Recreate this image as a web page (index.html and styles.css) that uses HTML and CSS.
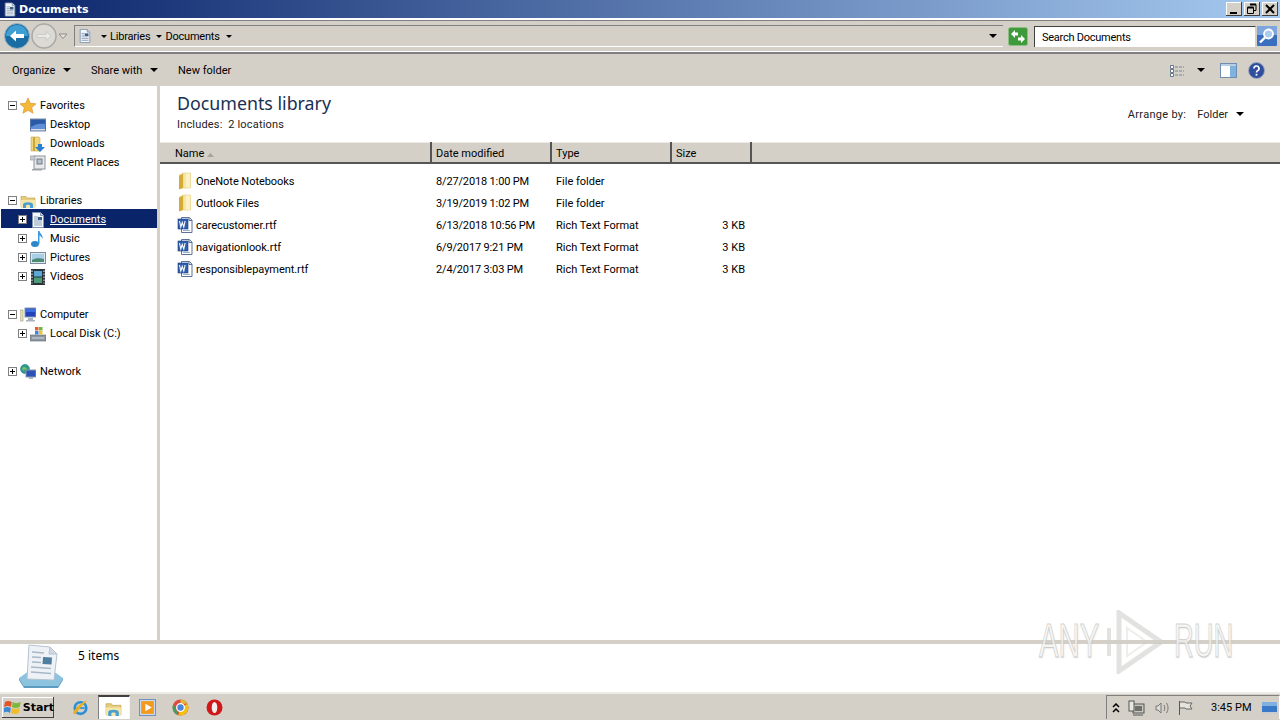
FILE: index.html
```html
<!DOCTYPE html>
<html>
<head>
<title>Documents</title>
<link rel="stylesheet" href="styles.css">
</head>
<body>
<svg class="defs" width="0" height="0">
	<defs>
		<symbol id="doc" viewBox="0 0 16 16">
			<path d="M2.500 .5h8l3 3v12h-11z" fill="#f4f7fb" stroke="#7f93ad"/>
			<path d="M10.500 .5v3h3" fill="#cfdcec" stroke="#7f93ad"/>
			<path d="M4 5h4M4 7h4M4 9h8M4 11h8M4 13h8" stroke="#8da0b8"/>
			<rect x="8" y="5" width="4" height="3" fill="#3b5f8a"/>
		</symbol>
		<symbol id="folder" viewBox="0 0 16 18">
			<path d="M2 3l4-2h7v15H6l-4 1z" fill="#e3c765"/>
			<path d="M6 1h7.500v15H6z" fill="#f6e7a4" stroke="#e2cd7c" stroke-width=".6"/>
			<path d="M2 4l4-2v14l-4 1.500z" fill="#d4ab35"/>
			<path d="M9 1.500h4v14H9z" fill="#fbf2c8"/>
		</symbol>
		<symbol id="rtf" viewBox="0 0 16 16">
			<path d="M4.500 .5h8l2.500 2.500v12.500H4.500z" fill="#fff" stroke="#5b7396"/>
			<path d="M12 .5v3h3" fill="#d5dfec" stroke="#5b7396"/>
			<rect x="1" y="2" width="10" height="10" fill="#2f5fae" stroke="#1c3f80" stroke-width=".6"/>
			<path d="M2.500 4l1.300 6 1.500-4.500L6.800 10l1.300-6" fill="none" stroke="#fff" stroke-width="1.100"/>
			<path d="M6 13.500h7" stroke="#9db1ca"/>
		</symbol>
		<symbol id="libfolder" viewBox="0 0 16 16">
			<path d="M1 3.500h5l1 1.500h8v9H1z" fill="#e6cd7c" stroke="#b89b48" stroke-width=".6"/>
			<path d="M1 7h14v7.500H1z" fill="#f3e6a8"/>
			<path d="M3 15v-3.500c0-3 10-3 10 0V15h-3v-2.500c0-1-4-1-4 0V15z" fill="#4a9fd0"/>
		</symbol>
		<symbol id="ie" viewBox="0 0 16 16">
			<ellipse cx="8" cy="8.500" rx="5.500" ry="5.500" fill="none" stroke="#2a8fd6" stroke-width="2.400"/>
			<path d="M4 8.500h8" stroke="#2a8fd6" stroke-width="1.600"/>
			<path d="M1 13.500C3 8 9 3 14.500 1.500 11 5 6 10 3 14.500z" fill="#e8b020"/>
		</symbol>
		<symbol id="plus" viewBox="0 0 9 9">
			<rect x=".5" y=".5" width="8" height="8" fill="#fff" stroke="#808080"/>
			<path d="M2 4.500h5M4.500 2v5" stroke="#000"/>
		</symbol>
		<symbol id="minus" viewBox="0 0 9 9">
			<rect x=".5" y=".5" width="8" height="8" fill="#fff" stroke="#808080"/>
			<path d="M2 4.500h5" stroke="#000"/>
		</symbol>
	</defs>
</svg>

<div class="titlebar">
	<svg class="title-icon"><use href="#doc"/></svg>
	<span class="title-text">Documents</span>
	<div class="win-buttons">
		<div class="win-btn"><svg width="16" height="14"><path d="M4 10h7v2H4z" fill="#000"/></svg></div>
		<div class="win-btn"><svg width="16" height="14"><path d="M6 2.500h6v6h-2M3.500 5.500h6v6h-6z" fill="none" stroke="#000"/><path d="M6 2.500h6M3.500 5.500h6" stroke="#000" stroke-width="2"/></svg></div>
		<div class="win-btn"><svg width="16" height="14"><path d="M4 3l8 8M12 3l-8 8" stroke="#000" stroke-width="2"/></svg></div>
	</div>
</div>

<div class="addressbar">
	<div class="nav-buttons">
		<svg class="nav-back" width="26" height="26" viewBox="0 0 26 26">
			<circle cx="13" cy="13" r="12.500" fill="#1a6da3" stroke="#9db5c4"/>
			<path d="M2 13a11 11 0 0 1 22 0z" fill="#3f9fd2"/>
			<path d="M6 13l6-5.500v3.500h8v4h-8v3.500z" fill="#fff"/>
		</svg>
		<svg class="nav-fwd" width="26" height="26" viewBox="0 0 26 26">
			<circle cx="13" cy="13" r="12" fill="#dcdad4" stroke="#a8a8a4" stroke-width="1.500"/>
			<path d="M20 13l-5-4.500v3H6v3h9v3z" fill="#eceae6" stroke="#bbb" stroke-width=".6"/>
		</svg>
		<svg class="nav-drop" width="10" height="7"><path d="M1 1l4 4.500L9 1z" fill="#e6e4de" stroke="#8c8c8c"/></svg>
	</div>
	<div class="address-box">
		<svg class="address-icon"><use href="#doc"/></svg>
		<span class="crumb-arrow"></span>
		<span class="crumb">Libraries</span>
		<span class="crumb-arrow"></span>
		<span class="crumb">Documents</span>
		<span class="crumb-arrow"></span>
		<span class="address-space"></span>
		<span class="crumb-arrow"></span>
	</div>
	<svg class="refresh" width="20" height="19" viewBox="0 0 20 19">
		<rect x=".5" y=".5" width="19" height="18" rx="2" fill="#3e9a3a" stroke="#8bbf86"/>
		<path d="M3 7l4-4v2.500h3v3H7V11zM17 12l-4 4v-2.500h-3v-3h3V8z" fill="#fff"/>
	</svg>
	<div class="search-box">Search Documents</div>
	<svg class="search-btn" width="20" height="20" viewBox="0 0 20 20">
		<rect width="20" height="20" rx="1" fill="#3a6fc0"/>
		<rect width="20" height="9" fill="#7fa6dc"/>
		<circle cx="11.500" cy="8" r="4.500" fill="#a9cdf0" stroke="#fff" stroke-width="1.800"/>
		<path d="M8 11.500l-5 5" stroke="#fff" stroke-width="2.400"/>
	</svg>
</div>

<div class="toolbar">
	<div class="tool tool-organize">Organize<span class="caret"></span></div>
	<div class="tool tool-share">Share with<span class="caret"></span></div>
	<div class="tool">New folder</div>
	<div class="tool-right">
		<svg width="16" height="13" viewBox="0 0 16 13">
			<path d="M1.500 1.500h3v3h-3zM1.500 5.500h3v3h-3zM1.500 9.500h3v3h-3z" fill="#fff" stroke="#66788f"/>
			<path d="M6 3h9M6 7h9M6 11h9" stroke="#74869c" stroke-dasharray="3 1"/>
		</svg>
		<span class="caret view-caret"></span>
		<svg class="pane-icon" width="17" height="15" viewBox="0 0 17 15">
			<rect x=".5" y=".5" width="16" height="14" fill="#fff" stroke="#6f8db0"/>
			<rect x="10" y="1" width="6" height="13" fill="#7fb2dc"/>
			<path d="M1 1h15v2H1z" fill="#b9cfe6"/>
		</svg>
		<svg class="help-icon" width="17" height="17" viewBox="0 0 17 17">
			<circle cx="8.500" cy="8.500" r="8" fill="#2f4f9e" stroke="#a0a8bc"/>
			<path d="M6 6.500a2.500 2.500 0 1 1 3.500 2.300c-.7.300-1 .7-1 1.700" fill="none" stroke="#fff" stroke-width="1.700"/>
			<rect x="7.600" y="11.800" width="1.800" height="1.800" fill="#fff"/>
		</svg>
	</div>
</div>

<div class="main">
	<div class="sidebar">
		<div class="tree-row"><svg class="exp"><use href="#minus"/></svg>
			<svg class="ico" viewBox="0 0 16 16"><path d="M8 0l2.300 5.300 5.700.5-4.300 3.800 1.300 5.600L8 12.300 3 15.200l1.300-5.600L0 5.800l5.700-.5z" fill="#f5b93a" stroke="#d98a20" stroke-width=".6"/></svg>Favorites</div>
		<div class="tree-row child"><span class="exp-gap"></span>
			<svg class="ico" viewBox="0 0 16 16"><rect y="2" width="16" height="12" fill="#2a5aa8" stroke="#7b8da8"/><path d="M1 10c4-3 9-4 14-3v6H1z" fill="#5f8fd6"/><path d="M1 12h14v1.500H1z" fill="#d8dde6"/></svg>Desktop</div>
		<div class="tree-row child"><span class="exp-gap"></span>
			<svg class="ico" viewBox="0 0 16 16"><path d="M1 1h8l1 1v13H1z" fill="#efd67c" stroke="#c2a650" stroke-width=".6"/><path d="M3 1h2v14H3z" fill="#c9a83e"/><path d="M8 8h4v3h3l-5 5-5-5h3z" fill="#2a7fd0"/></svg>Downloads</div>
		<div class="tree-row child"><span class="exp-gap"></span>
			<svg class="ico" viewBox="0 0 16 16"><rect x="4" y="1" width="11" height="13" fill="#e8ebee" stroke="#8d9499"/><rect x="7" y="4" width="5" height="5" fill="#b6c2cc" stroke="#6f7a82"/><path d="M0 1h5v4H0z" fill="#c5cbd0" stroke="#8d9499" stroke-width=".6"/><path d="M2 14h10v1.500H2z" fill="#9aa4ac"/></svg>Recent Places</div>
		<div class="tree-gap"></div>

		<div class="tree-row"><svg class="exp"><use href="#minus"/></svg>
			<svg class="ico"><use href="#libfolder"/></svg>Libraries</div>
		<div class="tree-row child selected"><svg class="exp"><use href="#plus"/></svg>
			<svg class="ico"><use href="#doc"/></svg><span class="sel-label">Documents</span></div>
		<div class="tree-row child"><svg class="exp"><use href="#plus"/></svg>
			<svg class="ico" viewBox="0 0 16 16"><ellipse cx="5" cy="13" rx="4" ry="3" fill="#2c86c9"/><path d="M8 13V0h1.500c.500 3 4 4 3 8-.5-2-2-3-3-3.500V13z" fill="#3d9ae0"/></svg>Music</div>
		<div class="tree-row child"><svg class="exp"><use href="#plus"/></svg>
			<svg class="ico" viewBox="0 0 16 16"><rect x=".5" y="2.500" width="15" height="11" fill="#dfe8ee" stroke="#7d8d9c"/><rect x="2" y="4" width="12" height="8" fill="#a9cfe6"/><path d="M2 10c3-2 8-2 12-1v3H2z" fill="#4c8a74"/></svg>Pictures</div>
		<div class="tree-row child"><svg class="exp"><use href="#plus"/></svg>
			<svg class="ico" viewBox="0 0 16 16"><rect x="1" y="0" width="14" height="16" fill="#2b3238"/><rect x="4" y="2" width="8" height="5.500" fill="#5aa8d8"/><rect x="4" y="8.500" width="8" height="5.500" fill="#4d9a78"/><path d="M2 1.500v13M14 1.500v13" stroke="#cfd6da" stroke-width="1.200" stroke-dasharray="1.500 1.500"/></svg>Videos</div>
		<div class="tree-gap"></div>

		<div class="tree-row"><svg class="exp"><use href="#minus"/></svg>
			<svg class="ico" viewBox="0 0 16 16"><rect x="0" y="3" width="3" height="11" fill="#e4e0b8" stroke="#9a9a80" stroke-width=".6"/><rect x="5" y="1" width="11" height="9" fill="#2244b8" stroke="#8d99ad"/><path d="M6 2h9v3H6z" fill="#3c6ee0"/><path d="M8 11h5v2h2v1.500H6V13h2z" fill="#a9b2bd"/></svg>Computer</div>
		<div class="tree-row child"><svg class="exp"><use href="#plus"/></svg>
			<svg class="ico" viewBox="0 0 16 16"><path d="M0 9h16v6H0z" fill="#8c97a3" stroke="#5e6872" stroke-width=".6"/><path d="M5 1h3.500v3.500H5z" fill="#e85d30"/><path d="M9 1h3.500v3.500H9z" fill="#70b83a"/><path d="M5 5h3.500v3.500H5z" fill="#3a88d8"/><path d="M9 5h3.500v3.500H9z" fill="#f2c230"/><path d="M2 12h12" stroke="#d5dade"/></svg>Local Disk (C:)</div>
		<div class="tree-gap"></div>

		<div class="tree-row"><svg class="exp"><use href="#plus"/></svg>
			<svg class="ico" viewBox="0 0 16 16"><circle cx="5" cy="5" r="4.500" fill="#2e9a88" stroke="#1e7c9c" stroke-width=".6"/><path d="M2 4c2-2 4-1 5 1-2 0-3 1-4 2z" fill="#74c26a"/><rect x="6" y="6" width="10" height="7" fill="#2a52b8" stroke="#8d99ad"/><path d="M9 13h4v2h-4z" fill="#a9b2bd"/></svg>Network</div>
	</div>

	<div class="content">
		<div class="lib-head">
			<div class="lib-info">
				<div class="lib-title">Documents library</div>
				<div class="lib-sub">Includes:&nbsp; 2 locations</div>
			</div>
			<div class="arrange">Arrange by:<span class="arrange-val">Folder</span><span class="caret"></span></div>
		</div>

		<div class="columns">
			<div class="col col-name">Name<svg class="sort" width="7" height="4"><path d="M3.500 0L7 4H0z" fill="#a8a49c"/></svg></div>
			<div class="col col-date">Date modified</div>
			<div class="col col-type">Type</div>
			<div class="col col-size">Size</div>
			<div class="col col-rest"></div>
		</div>

		<div class="files">
			<div class="file-row">
				<div class="cell-name"><svg class="file-ico"><use href="#folder"/></svg>OneNote Notebooks</div>
				<div class="cell-date">8/27/2018 1:00 PM</div>
				<div class="cell-type">File folder</div>
				<div class="cell-size"></div>
			</div>
			<div class="file-row">
				<div class="cell-name"><svg class="file-ico"><use href="#folder"/></svg>Outlook Files</div>
				<div class="cell-date">3/19/2019 1:02 PM</div>
				<div class="cell-type">File folder</div>
				<div class="cell-size"></div>
			</div>
			<div class="file-row">
				<div class="cell-name"><svg class="file-ico"><use href="#rtf"/></svg>carecustomer.rtf</div>
				<div class="cell-date">6/13/2018 10:56 PM</div>
				<div class="cell-type">Rich Text Format</div>
				<div class="cell-size">3 KB</div>
			</div>
			<div class="file-row">
				<div class="cell-name"><svg class="file-ico"><use href="#rtf"/></svg>navigationlook.rtf</div>
				<div class="cell-date">6/9/2017 9:21 PM</div>
				<div class="cell-type">Rich Text Format</div>
				<div class="cell-size">3 KB</div>
			</div>
			<div class="file-row">
				<div class="cell-name"><svg class="file-ico"><use href="#rtf"/></svg>responsiblepayment.rtf</div>
				<div class="cell-date">2/4/2017 3:03 PM</div>
				<div class="cell-type">Rich Text Format</div>
				<div class="cell-size">3 KB</div>
			</div>
		</div>
	</div>
</div>

<div class="details">
	<svg class="details-icon" width="46" height="44" viewBox="0 0 46 44">
		<path d="M1 34l10-7h24l10 7-5 8H6z" fill="#8cc3de"/>
		<path d="M1 34l5 8h34l5-8v2l-5 8H6l-5-8z" fill="#5b9cc0"/>
		<path d="M11 1l21 2 7 7-3 26-27-1z" fill="#eef2f6" stroke="#b6c3d0"/>
		<path d="M32 3l-1 7 8 0z" fill="#cfdae5" stroke="#b6c3d0"/>
		<path d="M14 8l12 1M14 13l9 .500M14 18l9 .500M13 23l20 1.500M13 28l20 1.500" stroke="#a7b7c7" stroke-width="1.300"/>
		<path d="M25 13l9 .500-.5 7-9-.5z" fill="#4e7f9e"/>
	</svg>
	<div class="details-text">5 items</div>
</div>

<div class="taskbar">
	<div class="start">
		<svg width="17" height="16" viewBox="0 0 17 16">
			<path d="M1 3c2-1.500 4-1.500 7 0l-1 5c-2-1.500-4-1.500-7 0z" fill="#e2542a"/>
			<path d="M9 3c2 1.500 5 1.500 8 0l-1 5c-3 1.500-5 1.500-8 0z" fill="#7cb93a"/>
			<path d="M0 9c2-1.500 4-1.500 7 0l-1 5c-2-1.500-4-1.500-7 0z" fill="#3d88d6"/>
			<path d="M8 9c2 1.500 5 1.500 8 0l-1 5c-3 1.500-5 1.500-8 0z" fill="#f0bd2c"/>
		</svg>
		<span class="start-label">Start</span>
	</div>
	<div class="task-icons">
		<svg class="task-ico"><use href="#ie"/></svg>
		<div class="task-active"><svg class="task-ico"><use href="#libfolder"/></svg></div>
		<svg class="task-ico" viewBox="0 0 16 16"><rect x=".5" y=".5" width="15" height="15" fill="#cfe0f0" stroke="#6f92c0"/><rect x="2" y="2" width="12" height="12" fill="#f39a1e"/><path d="M6 4.500l6 3.500-6 3.500z" fill="#fff"/></svg>
		<svg class="task-ico" viewBox="0 0 16 16"><circle cx="8" cy="8" r="7.500" fill="#dd4b3e"/><path d="M8 .5A7.500 7.500 0 0 1 14.500 4.500H8z" fill="#e0b93a"/><path d="M14.500 4.500A7.500 7.500 0 0 1 6 15.300L8 8z" fill="#f4c20d"/><path d="M1.500 4.500L6 15.300A7.500 7.500 0 0 1 1.500 4.500z" fill="#3da35a"/><circle cx="8" cy="8" r="3.600" fill="#4a86d8" stroke="#fff" stroke-width="1.200"/></svg>
		<svg class="task-ico" viewBox="0 0 16 16"><ellipse cx="8" cy="8" rx="7.500" ry="7.500" fill="#d01818"/><ellipse cx="8" cy="8" rx="2.600" ry="5.200" fill="#f4f0ee"/></svg>
	</div>
	<div class="tray">
		<svg width="8" height="10" viewBox="0 0 8 10"><path d="M1 4l3-3 3 3M1 9l3-3 3 3" fill="none" stroke="#000" stroke-width="1.500"/></svg>
		<svg class="tray-net" width="17" height="16" viewBox="0 0 17 16"><rect x="5" y="4" width="11" height="9" fill="#c8c8c0" stroke="#555"/><rect x="7" y="6" width="7" height="5" fill="#70706a"/><rect x="1" y="1" width="5" height="10" fill="#e8e8e0" stroke="#555"/><path d="M5 15h10" stroke="#555"/></svg>
		<svg class="tray-vol" width="16" height="14" viewBox="0 0 16 14"><path d="M1 5h2l3-3v10L3 9H1z" fill="#dcdcd4" stroke="#777"/><path d="M9 4c1 2 1 4 0 6M11.500 2c2 3 2 7 0 10" fill="none" stroke="#777"/></svg>
		<svg class="tray-flag" width="16" height="15" viewBox="0 0 16 15"><path d="M1.500 1v14" stroke="#555"/><path d="M2 2h5l1 1h6l-2 3 2 3H8L7 8H2" fill="#e4e4dc" stroke="#666"/></svg>
		<span class="clock">3:45 PM</span>
		<svg class="tray-desk" width="15" height="12" viewBox="0 0 15 12"><rect width="15" height="12" fill="#3a78c8"/><path d="M0 0h15v4H0z" fill="#7fb0e0"/><path d="M0 10h15v2H0z" fill="#c8ccd0"/></svg>
	</div>
</div>

<div class="watermark">
	<span class="wm-text wm-any">ANY</span>
	<svg class="wm-logo" width="58" height="64" viewBox="0 0 58 64">
		<path d="M14 3v58l42-29z" fill="none" stroke="#cfcfcb" stroke-opacity=".6" stroke-width="5"/>
		<path d="M22 18v28l20-14z" fill="none" stroke="#cfcfcb" stroke-opacity=".35" stroke-width="2"/>
		<path d="M4 18v28" stroke="#cfcfcb" stroke-opacity=".6" stroke-width="4"/>
	</svg>
	<span class="wm-text wm-run">RUN</span>
</div>
</body>
</html>
```

FILE: styles.css
```css
* { box-sizing: border-box; }
html, body { margin: 0; padding: 0; }
body { width: 1280px; height: 720px; overflow: hidden; position: relative; display: flex; flex-direction: column; background: #fff; color: #000; font-family: "Roboto", "Noto Sans", sans-serif; font-size: 11px; }
.defs { position: absolute; }

/* title bar */
.titlebar { height: 18px; display: flex; align-items: center; padding: 0 2px 0 3px; background: linear-gradient(to right, #0a246a, #a6caf0); color: #fff; }
.title-icon { width: 14px; height: 15px; margin-right: 2px; }
.title-text { font-family: "DejaVu Sans", sans-serif; font-size: 11px; font-weight: bold; }
.win-buttons { margin-left: auto; display: flex; gap: 2px; }
.win-btn { width: 16px; height: 14px; background: #d4d0c8; box-shadow: inset -1px -1px #404040, inset 1px 1px #fff; }
.win-btn svg { display: block; }

/* address bar */
.addressbar { height: 36px; background: #d4d0c8; display: flex; align-items: center; padding: 1px 1px 1px 4px; border-top: 2px solid #fff; border-bottom: 2px solid #808080; box-shadow: inset 0 1px #808080, inset 0 -1px #fff; }
.nav-buttons { display: flex; align-items: center; width: 70px; flex: none; }
.nav-fwd { margin-left: 1px; }
.nav-drop { margin-left: 1px; }
.address-box { width: 929px; height: 22px; display: flex; align-items: center; padding: 0 6px 0 3px; border-top: 1px solid #808080; border-left: 1px solid #808080; border-bottom: 1px solid #fff; }
.address-icon { width: 14px; height: 16px; margin-right: 9px; }
.crumb { margin: 0 6px 0 3px; letter-spacing: -.2px; }
.crumb-arrow { width: 0; height: 0; border-left: 3px solid transparent; border-right: 3px solid transparent; border-top: 3px solid #000; }
.address-space { flex: 1; }
.address-box .crumb-arrow:last-child { border-left-width: 4px; border-right-width: 4px; border-top-width: 4px; }
.refresh { margin-left: 5px; flex: none; }
.search-box { width: 222px; height: 21px; margin-left: 6px; padding: 4px 7px 0; background: #fff; letter-spacing: -.25px; border-top: 1px solid #404040; border-left: 1px solid #404040; border-right: 1px solid #d4d0c8; }
.search-btn { margin-left: 1px; flex: none; }

/* command bar */
.toolbar { height: 32px; background: #d4d0c8; display: flex; align-items: center; padding: 0 0 0 12px; }
.tool { display: flex; align-items: center; }
.tool-organize { width: 79px; }
.tool-share { width: 87px; }
.caret { width: 0; height: 0; margin-left: 8px; border-left: 4px solid transparent; border-right: 4px solid transparent; border-top: 4px solid #000; }
.tool-right { margin-left: auto; display: flex; align-items: center; padding-right: 15px; }
.view-caret { margin-left: 12px; }
.pane-icon { margin-left: 15px; }
.help-icon { margin-left: 11px; }

/* main area */
.main { height: 554px; display: flex; }
.sidebar { width: 160px; padding-top: 9px; background: #fff; border-right: 3px solid #d4d0c8; }
.tree-row { height: 19px; display: flex; align-items: center; padding-left: 8px; padding-top: 2px; white-space: nowrap; }
.tree-row.child { padding-left: 18px; }
.tree-gap { height: 19px; }
.exp { width: 9px; height: 9px; margin-right: 3px; flex: none; }
.exp-gap { width: 9px; flex: none; margin-right: 3px; }
.ico { width: 16px; height: 16px; margin-right: 4px; flex: none; }
.selected { background: #0a246a; color: #fff; margin-left: 1px; padding-left: 17px !important; }
.sel-label { text-decoration: underline; }

.content { flex: 1; display: flex; flex-direction: column; }
.lib-head { height: 56px; display: flex; justify-content: space-between; padding: 5px 36px 0 17px; }
.lib-title { font-family: "Noto Sans", sans-serif; font-size: 17.800px; line-height: 24px; color: #1a3050; }
.lib-sub { line-height: 15px; margin-top: 2px; color: #222; letter-spacing: .17px; }
.arrange { display: flex; align-items: center; height: 16px; margin-top: 15px; color: #222; letter-spacing: .3px; }
.arrange-val { margin-left: 11px; letter-spacing: 0; }
.columns { height: 22px; display: flex; background: #d4d0c8; border-bottom: 2px solid #555; box-shadow: inset 0 1px #ece9e2; }
.col { height: 20px; padding: 3px 0 0 4px; border-right: 2px solid #555; line-height: 17px; }
.col-name { width: 272px; padding-left: 15px; display: flex; align-items: baseline; }
.sort { margin-left: 3px; }
.col-date { width: 120px; }
.col-type { width: 120px; }
.col-size { width: 80px; }
.col-rest { flex: 1; border-right: none; }

.files { padding-top: 6px; }
.file-row { height: 22px; display: flex; align-items: center; white-space: nowrap; }
.cell-name { width: 271px; padding-left: 17px; display: flex; align-items: center; letter-spacing: -.05px; }
.file-ico { width: 16px; height: 18px; margin-right: 3px; flex: none; }
.cell-date, .cell-type { width: 120px; padding-left: 5px; }
.cell-date { letter-spacing: -.15px; }
.cell-size { width: 74px; text-align: right; }

/* details pane */
.details { height: 52px; display: flex; background: #fff; border-top: 4px solid #d4d0c8; padding-left: 18px; }
.details-text { margin: 3px 0 0 14px; font-family: "Noto Sans", sans-serif; font-size: 12px; }

/* taskbar */
.taskbar { height: 28px; display: flex; align-items: center; background: #d4d0c8; border-top: 2px solid #ecebe6; padding-left: 2px; }
.start { width: 52px; height: 21px; display: flex; align-items: center; gap: 2px; padding-left: 2px; background: #d4d0c8; box-shadow: inset -1px -1px #404040, inset 1px 1px #fff; }
.start-label { font-family: "DejaVu Sans", sans-serif; font-size: 11px; font-weight: bold; }
.task-icons { display: flex; align-items: center; margin-left: 18px; gap: 16.800px; }
.task-ico { width: 17px; height: 17px; display: block; }
.task-active { width: 32px; height: 24px; display: flex; align-items: center; justify-content: center; margin: 0 -8px; background: #fff; border-top: 2px solid #404040; border-left: 1px solid #808080; border-right: 1px solid #f4f4f2; }
.tray { margin-left: auto; width: 174px; height: 24px; display: flex; align-items: center; padding-left: 5px; border-top: 1px solid #808080; border-left: 1px solid #808080; border-right: 1px solid #fff; flex: none; }
.tray-net { margin-left: 8px; }
.tray-vol { margin-left: 10px; }
.tray-flag { margin-left: 7px; }
.clock { margin-left: 17px; white-space: nowrap; }
.tray-desk { margin-left: 11px; }

/* corner watermark */
.watermark { position: absolute; left: 1039px; top: 609px; display: flex; align-items: center; height: 64px; }
.wm-text { font-family: "Liberation Sans", sans-serif; font-size: 48px; line-height: 64px; color: rgba(255, 255, 255, .6); -webkit-text-stroke: 1px rgba(185, 185, 180, .65); transform-origin: left center; text-shadow: 1px 1px 2px rgba(200, 200, 196, .5); }
.wm-any { width: 66px; transform: scaleX(.61); }
.wm-run { width: 60px; margin-left: 11px; transform: scaleX(.57); }
.wm-logo { margin-top: 2px; }
```
